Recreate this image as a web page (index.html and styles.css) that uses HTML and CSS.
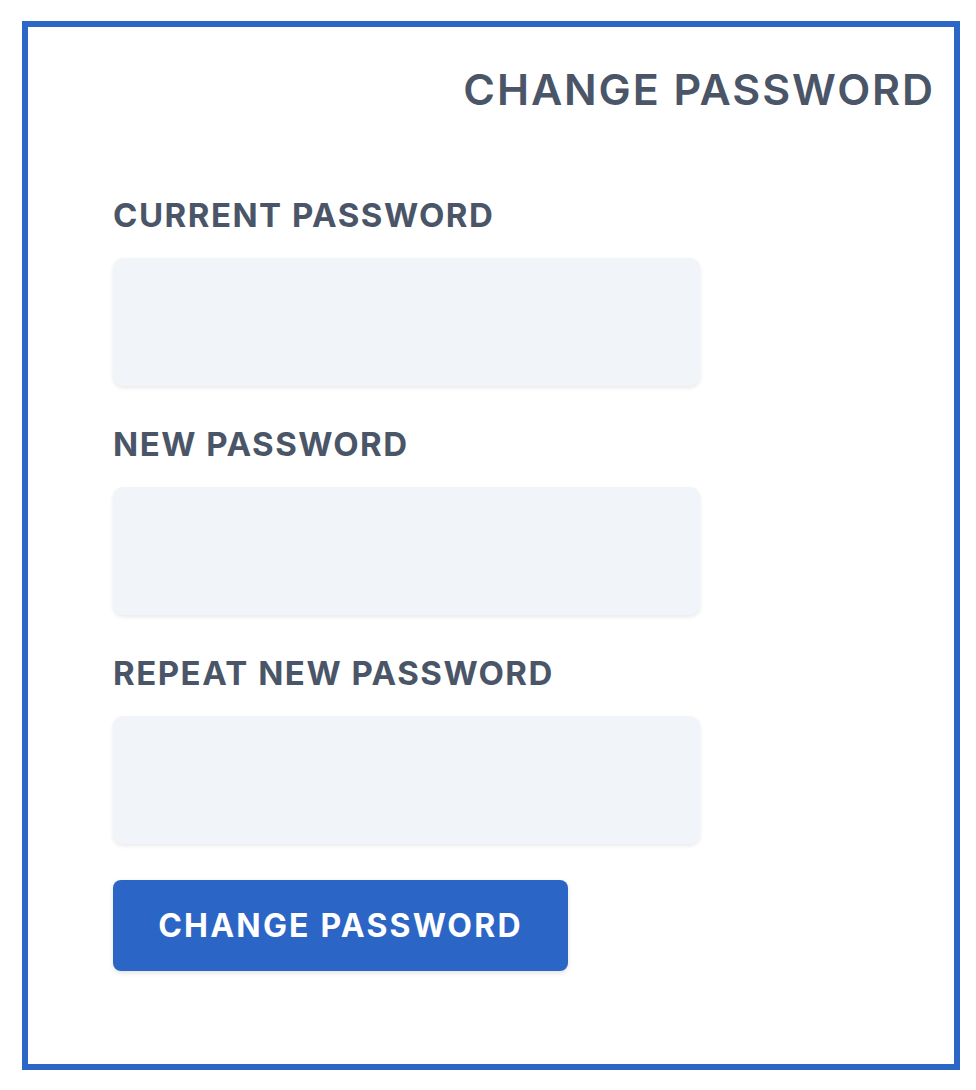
FILE: index.html
```html
<!DOCTYPE html>
<html lang="en">
<head>
    <meta charset="UTF-8">
    <meta name="viewport" content="width=device-width, initial-scale=1.0">
    <title>Change Password</title>
    <link rel="stylesheet" href="styles.css">
</head>
<body>
    <div class="Panel">
        <h2 class="Title">CHANGE PASSWORD</h2>
        <form class="PassForm">
            <label class="Label" for="current">CURRENT PASSWORD</label>
            <input class="Field" id="current" type="password">

            <label class="Label" for="newpass">NEW PASSWORD</label>
            <input class="Field" id="newpass" type="password">

            <label class="Label" for="repeat">REPEAT NEW PASSWORD</label>
            <input class="Field" id="repeat" type="password">

            <button class="Submit" type="button">CHANGE PASSWORD</button>
        </form>
    </div>
</body>
</html>
```

FILE: styles.css
```css
*{
    box-sizing: border-box;
    margin: 0;
    padding: 0;
}
body{
    background: #fff;
    font-family: Inter, "Noto Sans", sans-serif;
    color: #4a5568;
}
.Panel{
    width: 938px;
    height: 1049px;
    margin: 21px 0 0 22px;
    border: 6px solid #2c67c8;
    padding: 0 22px 0 85px;
}
.Title{
    text-align: right;
    font-size: 43px;
    font-weight: 600;
    line-height: 1;
    letter-spacing: 1.9px;
    margin-top: 41px;
    margin-right: -3px;
}
.PassForm{
    display: flex;
    flex-direction: column;
    align-items: flex-start;
    margin-top: 88px;
}
.Label{
    font-size: 33px;
    font-weight: 700;
    line-height: 1;
    letter-spacing: 1.5px;
    margin-bottom: 26px;
}
.Field{
    width: 587px;
    height: 128px;
    border: none;
    border-radius: 10px;
    background: #f1f4f8;
    box-shadow: 0 2px 4px rgba(0,0,0,0.09);
    margin-bottom: 42px;
}
.Submit{
    width: 455px;
    height: 91px;
    margin-top: -6px;
    border: none;
    border-radius: 8px;
    background: #2b66c6;
    color: #fff;
    font-family: Inter, "Noto Sans", sans-serif;
    font-size: 32px;
    font-weight: 700;
    letter-spacing: 2.2px;
    box-shadow: 0 2px 5px rgba(0,0,0,0.12);
}
```
